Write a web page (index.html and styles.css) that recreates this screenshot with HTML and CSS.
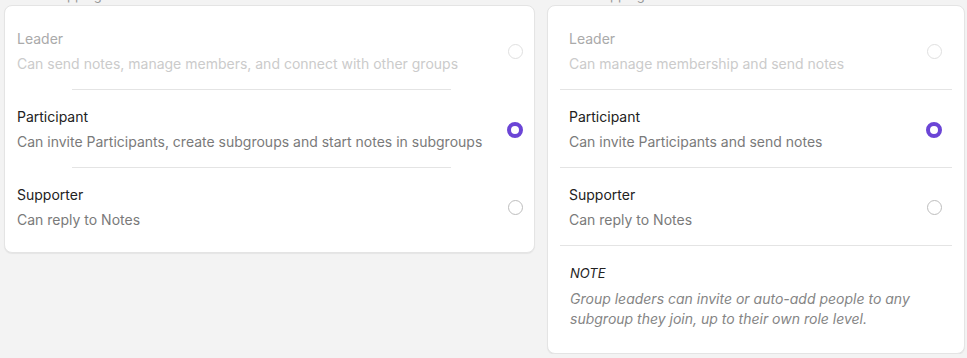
FILE: index.html
```html
<!DOCTYPE html>
<html lang="en">
<head>
    <meta charset="UTF-8">
    <title>Role mapping</title>
    <link rel="stylesheet" href="styles.css">
</head>
<body>
    <div class="columns">
        <div class="column column-wide">
            <div class="label">Role mapping</div>
            <div class="card">
                <div class="option disabled">
                    <div class="text">
                        <div class="title">Leader</div>
                        <div class="desc">Can send notes, manage members, and connect with other groups</div>
                    </div>
                    <span class="radio"></span>
                </div>
                <div class="divider inset"></div>
                <div class="option">
                    <div class="text">
                        <div class="title">Participant</div>
                        <div class="desc">Can invite Participants, create subgroups and start notes in subgroups</div>
                    </div>
                    <span class="radio checked"></span>
                </div>
                <div class="divider inset"></div>
                <div class="option">
                    <div class="text">
                        <div class="title">Supporter</div>
                        <div class="desc">Can reply to Notes</div>
                    </div>
                    <span class="radio"></span>
                </div>
            </div>
        </div>
        <div class="column column-narrow">
            <div class="label">Role mapping</div>
            <div class="card card-padded">
                <div class="option disabled">
                    <div class="text">
                        <div class="title">Leader</div>
                        <div class="desc">Can manage membership and send notes</div>
                    </div>
                    <span class="radio"></span>
                </div>
                <div class="divider"></div>
                <div class="option">
                    <div class="text">
                        <div class="title">Participant</div>
                        <div class="desc">Can invite Participants and send notes</div>
                    </div>
                    <span class="radio checked"></span>
                </div>
                <div class="divider"></div>
                <div class="option">
                    <div class="text">
                        <div class="title">Supporter</div>
                        <div class="desc">Can reply to Notes</div>
                    </div>
                    <span class="radio"></span>
                </div>
                <div class="divider"></div>
                <div class="note">
                    <div class="note-title">NOTE</div>
                    <div class="note-text">Group leaders can invite or auto-add people to any subgroup they join, up to their own role level.</div>
                </div>
            </div>
        </div>
    </div>
</body>
</html>
```

FILE: styles.css
```css
body {
    margin: 0;
    background: #f3f3f3;
    font-family: 'Inter', 'Noto Sans', sans-serif;
    color: #222;
}
.columns {
    display: flex;
    align-items: flex-start;
    gap: 12px;
    padding: 0 2px 0 4px;
}
.column {
    display: flex;
    flex-direction: column;
}
.column-wide {
    width: 531px;
}
.column-narrow {
    width: 418px;
}
.label {
    font-size: 13px;
    line-height: 16px;
    height: 16px;
    margin-top: -13px;
    margin-bottom: 2px;
    padding-left: 14px;
    color: #999;
}
.card {
    background: #fff;
    border: 1px solid #e4e4e4;
    border-radius: 8px;
    box-shadow: 0 1px 1px rgba(0, 0, 0, 0.06);
    padding: 6px 11px 7px 12px;
}
.card-padded {
    padding: 6px 12px 6px 12px;
}
.option {
    display: flex;
    align-items: center;
    justify-content: space-between;
    padding: 17px 0 15px 0;
}
.card-padded .option {
    padding-left: 9px;
    padding-right: 10px;
}
.text {
    display: flex;
    flex-direction: column;
    gap: 5px;
}
.title {
    font-size: 14px;
    line-height: 20px;
    color: #222;
}
.desc {
    font-size: 14px;
    line-height: 20px;
    color: #7a7a7a;
}
.disabled .title {
    color: #aaa;
}
.disabled .desc {
    color: #cbcbcb;
}
.radio {
    width: 13px;
    height: 13px;
    border: 1.5px solid #bdbdbd;
    border-radius: 50%;
    flex-shrink: 0;
}
.disabled .radio {
    border-color: #e0e0e0;
}
.radio.checked {
    width: 8px;
    height: 8px;
    border: 4px solid #6b45d6;
}
.divider {
    height: 1px;
    background: #e4e4e4;
}
.divider.inset {
    margin-left: 55px;
    width: 379px;
}
.note {
    padding: 17px 10px 18px 10px;
    font-style: italic;
}
.note-title {
    font-size: 13px;
    line-height: 20px;
    color: #222;
    margin-bottom: 6px;
}
.note-text {
    font-size: 14px;
    line-height: 20px;
    color: #858585;
}
```
